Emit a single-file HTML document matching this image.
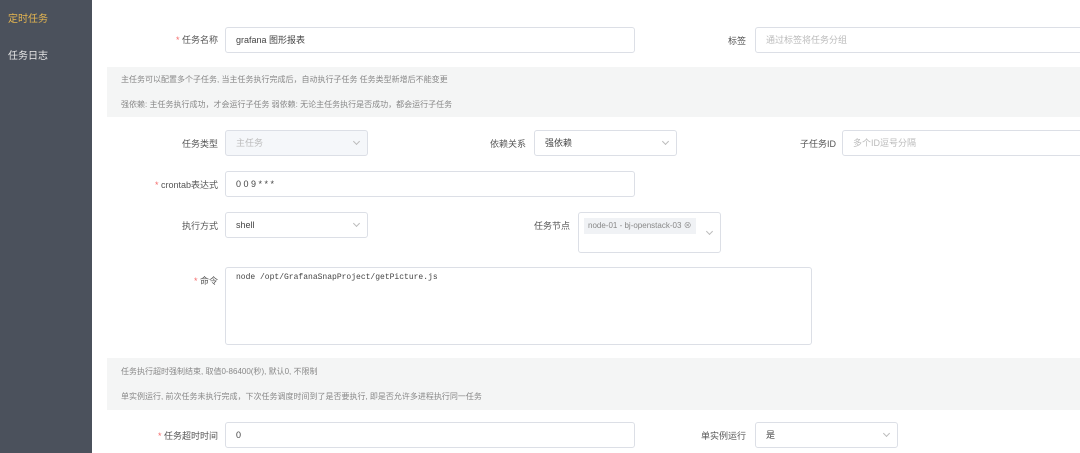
<!DOCTYPE html><html><head><meta charset="utf-8"><style>
*{box-sizing:border-box;margin:0;padding:0}
body{width:1080px;height:453px;overflow:hidden;background:#fff;font-family:"Liberation Sans","Noto Sans CJK SC",sans-serif;font-size:9px;color:#606266;position:relative}
.side{position:absolute;left:0;top:0;width:92px;height:453px;background:#4b515c}
.side div{position:absolute;left:8px;font-size:10px;color:#e8e8e8}
.lab{position:absolute;text-align:right;font-size:9px;color:#555}
.lab b{color:#f56c6c;font-weight:normal}
.inp{position:absolute;border:1px solid #dcdfe6;border-radius:3px;background:#fff;font-size:9px;color:#444;padding-left:10px;line-height:24px;height:26px}
.ph{color:#bbb}
.arr{position:absolute;right:8px;top:8px;width:5px;height:5px;border-right:1px solid #bbb;border-bottom:1px solid #bbb;transform:rotate(45deg)}
.tip{position:absolute;left:107px;width:973px;background:#f4f5f5;color:#888;font-size:8px}
.tip p{position:absolute;left:14px}
</style></head><body>
<div class="side"><div style="top:10px;color:#e6b650">定时任务</div><div style="top:47px">任务日志</div></div>

<div class="lab" style="left:130px;width:88px;top:33px"><b>* </b>任务名称</div>
<div class="inp" style="left:225px;top:27px;width:410px">grafana 图形报表</div>
<div class="lab" style="left:680px;width:66px;top:34px">标签</div>
<div class="inp ph" style="left:755px;top:27px;width:330px">通过标签将任务分组</div>

<div class="tip" style="top:67px;height:50px"><p style="top:7px">主任务可以配置多个子任务, 当主任务执行完成后，自动执行子任务 任务类型新增后不能变更</p><p style="top:32px">强依赖: 主任务执行成功，才会运行子任务 弱依赖: 无论主任务执行是否成功，都会运行子任务</p></div>

<div class="lab" style="left:130px;width:88px;top:137px">任务类型</div>
<div class="inp ph" style="left:225px;top:130px;width:143px;background:#f5f7fa">主任务<i class="arr"></i></div>
<div class="lab" style="left:440px;width:86px;top:137px">依赖关系</div>
<div class="inp" style="left:534px;top:130px;width:143px">强依赖<i class="arr"></i></div>
<div class="lab" style="left:750px;width:86px;top:137px">子任务ID</div>
<div class="inp ph" style="left:842px;top:130px;width:245px">多个ID逗号分隔</div>

<div class="lab" style="left:130px;width:88px;top:178px"><b>* </b>crontab表达式</div>
<div class="inp" style="left:225px;top:171px;width:410px">0 0 9 * * *</div>

<div class="lab" style="left:130px;width:88px;top:219px">执行方式</div>
<div class="inp" style="left:225px;top:212px;width:143px">shell<i class="arr"></i></div>
<div class="lab" style="left:490px;width:80px;top:219px">任务节点</div>
<div class="inp" style="left:578px;top:212px;width:143px;height:41px;padding-left:5px"><span style="background:#f0f2f5;color:#888;padding:2px 4px;font-size:8px;line-height:12px;display:inline-block;margin-top:4px">node-01 - bj-openstack-03 ⊗</span><i class="arr" style="top:16px"></i></div>

<div class="lab" style="left:130px;width:88px;top:274px"><b>* </b>命令</div>
<div class="inp" style="left:225px;top:267px;width:587px;height:78px;line-height:20px;font-family:'Liberation Mono',monospace;font-size:8px">node  /opt/GrafanaSnapProject/getPicture.js</div>

<div class="tip" style="top:358px;height:52px"><p style="top:8px">任务执行超时强制结束, 取值0-86400(秒), 默认0, 不限制</p><p style="top:33px">单实例运行, 前次任务未执行完成，下次任务调度时间到了是否要执行, 即是否允许多进程执行同一任务</p></div>

<div class="lab" style="left:130px;width:88px;top:429px"><b>* </b>任务超时时间</div>
<div class="inp" style="left:225px;top:422px;width:410px">0</div>
<div class="lab" style="left:660px;width:86px;top:429px">单实例运行</div>
<div class="inp" style="left:755px;top:422px;width:143px">是<i class="arr"></i></div>
</body></html>
